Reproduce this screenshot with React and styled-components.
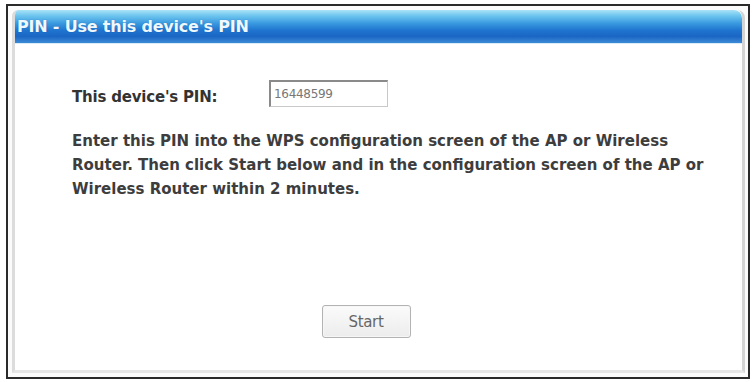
import React from "react";
import styled, { createGlobalStyle } from "styled-components";

const Global = createGlobalStyle`
  html, body { margin: 0; padding: 0; background: #fff; }
  body { font-family: "DejaVu Sans", Tahoma, sans-serif; }
`;

const Page = styled.div`
  width: 754px;
  height: 382px;
  padding: 4px 0 0 6px;
  box-sizing: border-box;
  background: #fff;
`;

const Frame = styled.div`
  width: 744px;
  height: 375px;
  box-sizing: border-box;
  border: 2px solid #2a2a2a;
  background: #fbfbfb;
  padding: 4px 3px 4px 4px;
  display: flex;
  flex-direction: column;
`;

const Panel = styled.div`
  flex: 1;
  display: flex;
  flex-direction: column;
  border-left: 3px solid #dcdcdc;
  border-right: 3px solid #d4d4d4;
  border-bottom: 3px solid #e6e6e6;
  border-radius: 6px 8px 0 0;
  overflow: hidden;
  background: #fff;
`;

const TitleBar = styled.div`
  height: 33px;
  display: flex;
  align-items: center;
  padding-left: 2px;
  background: linear-gradient(
    to bottom,
    #a9e3f7 0%,
    #6cc4ee 18%,
    #3a9ae0 40%,
    #1f74cf 62%,
    #1a66c4 80%,
    #3d8ad6 100%
  );
  border-top-right-radius: 8px;
  border-bottom: 1px solid #d9ecf7;
`;

const Title = styled.span`
  color: #eef8ff;
  font-family: "DejaVu Sans", Tahoma, sans-serif;
  font-weight: bold;
  font-size: 16px;
  letter-spacing: -0.2px;
  text-shadow: 0 0 1px rgba(0, 40, 100, 0.4);
`;

const Body = styled.div`
  flex: 1;
  display: flex;
  flex-direction: column;
  padding: 36px 10px 0 57px;
  color: #3a3a3a;
`;

const PinRow = styled.div`
  display: flex;
  align-items: flex-start;
`;

const Label = styled.span`
  width: 197px;
  padding-top: 8px;
  font-weight: bold;
  font-size: 15px;
  letter-spacing: -0.2px;
  color: #333;
`;

const PinInput = styled.div`
  width: 119px;
  height: 27px;
  box-sizing: border-box;
  border: 1px solid #c8c8c8;
  border-top: 2px solid #8a8a8a;
  border-left: 2px solid #8a8a8a;
  padding: 2px 3px;
  font-size: 12px;
  color: #777;
  letter-spacing: -0.3px;
  display: flex;
  align-items: center;
  background: #fff;
`;

const Text = styled.p`
  margin: 22px 0 0 0;
  font-weight: bold;
  font-size: 15px;
  line-height: 24px;
  letter-spacing: 0;
  color: #3d3d3d;
  white-space: nowrap;
`;

const Spacer = styled.div`
  flex: 1;
`;

const ButtonRow = styled.div`
  display: flex;
  justify-content: center;
  padding: 0 0 32px 0;
  margin-left: -72px;
`;

const Button = styled.button`
  width: 89px;
  height: 33px;
  border: 1px solid #b3b3b3;
  border-radius: 3px;
  background: linear-gradient(to bottom, #fbfbfb, #ececec);
  box-shadow: inset 0 0 0 1px #f6f6f6;
  font-family: "DejaVu Sans", Tahoma, sans-serif;
  font-size: 15px;
  color: #666;
  letter-spacing: -0.3px;
`;

export default function App() {
  return (
    <>
      <Global />
      <Page>
        <Frame>
          <Panel>
            <TitleBar>
              <Title>PIN - Use this device's PIN</Title>
            </TitleBar>
            <Body>
              <PinRow>
                <Label>This device's PIN:</Label>
                <PinInput>16448599</PinInput>
              </PinRow>
              <Text>
                Enter this PIN into the WPS configuration screen of the AP or Wireless
                <br />
                Router. Then click Start below and in the configuration screen of the AP or
                <br />
                Wireless Router within 2 minutes.
              </Text>
              <Spacer />
              <ButtonRow>
                <Button>Start</Button>
              </ButtonRow>
            </Body>
          </Panel>
        </Frame>
      </Page>
    </>
  );
}
